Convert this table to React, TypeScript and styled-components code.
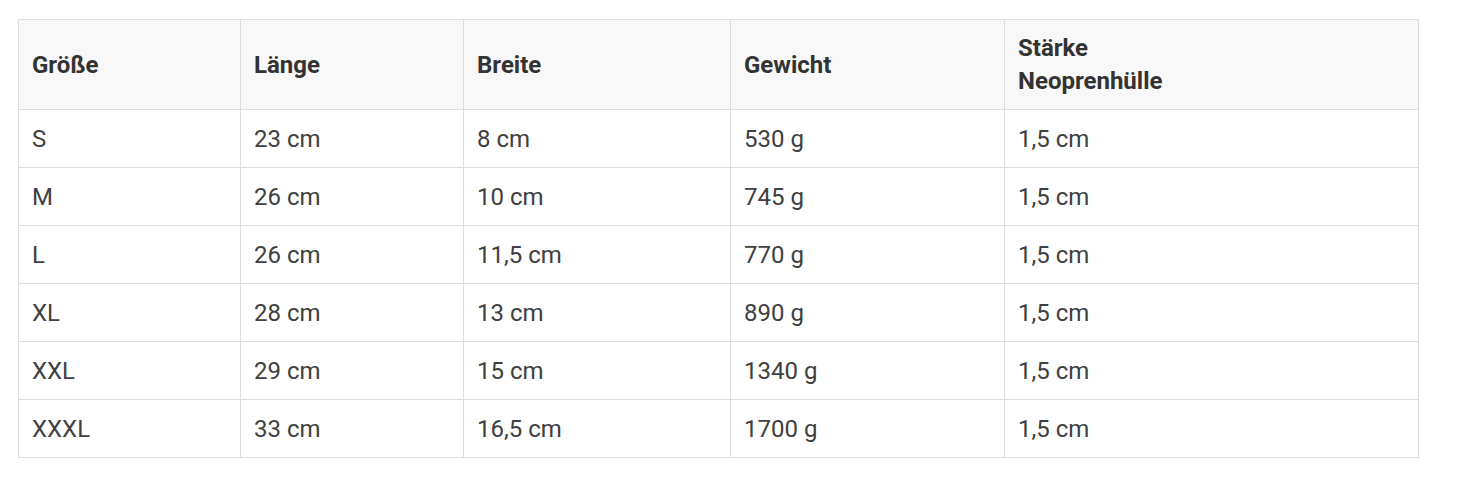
import * as React from "react";
import styled, { createGlobalStyle } from "styled-components";

const GlobalStyle = createGlobalStyle`
  body {
    margin: 0;
    background: #fff;
    font-family: Roboto, "Liberation Sans", sans-serif;
  }
`;

const Wrapper = styled.div`
  padding: 19px 50px 0 18px;
`;

const Table = styled.table`
  width: 1400px;
  border-collapse: collapse;
  table-layout: fixed;
  color: #333;
  font-size: 24px;
  line-height: 33px;
`;

const HeadCell = styled.th<{ $width: number }>`
  box-sizing: border-box;
  width: ${(p) => p.$width}px;
  background: #f8f8f8;
  border: 1px solid #dedede;
  padding: 12px 13px 11px;
  text-align: left;
  font-weight: 700;
  vertical-align: middle;
`;

const Cell = styled.td`
  box-sizing: border-box;
  border: 1px solid #dedede;
  padding: 13px 13px 11px;
  font-weight: 400;
  color: #404040;
  vertical-align: middle;
`;

const columns = [
  { label: "Größe", width: 222 },
  { label: "Länge", width: 223 },
  { label: "Breite", width: 267 },
  { label: "Gewicht", width: 274 },
  { label: "Stärke Neoprenhülle", width: 414 },
];

const rows = [
  ["S", "23 cm", "8 cm", "530 g", "1,5 cm"],
  ["M", "26 cm", "10 cm", "745 g", "1,5 cm"],
  ["L", "26 cm", "11,5 cm", "770 g", "1,5 cm"],
  ["XL", "28 cm", "13 cm", "890 g", "1,5 cm"],
  ["XXL", "29 cm", "15 cm", "1340 g", "1,5 cm"],
  ["XXXL", "33 cm", "16,5 cm", "1700 g", "1,5 cm"],
];

const App = () => (
  <>
    <GlobalStyle />
    <Wrapper>
      <Table>
        <thead>
          <tr>
            {columns.map((c, i) => (
              <HeadCell key={c.label} $width={c.width}>
                {i === 4 ? (
                  <>
                    Stärke
                    <br />
                    Neoprenhülle
                  </>
                ) : (
                  c.label
                )}
              </HeadCell>
            ))}
          </tr>
        </thead>
        <tbody>
          {rows.map((r) => (
            <tr key={r[0]}>
              {r.map((v, i) => (
                <Cell key={i}>{v}</Cell>
              ))}
            </tr>
          ))}
        </tbody>
      </Table>
    </Wrapper>
  </>
);

export default App;
